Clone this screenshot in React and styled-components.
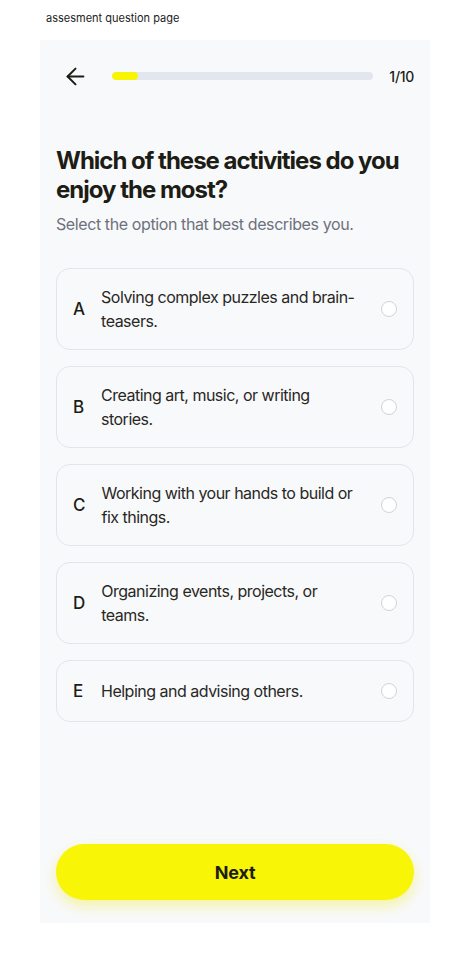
import styled, { createGlobalStyle } from "styled-components";
import { ArrowLeft } from "lucide-react";

const GlobalStyle = createGlobalStyle`
  body {
    margin: 0;
    background: #ffffff;
    font-family: Inter, "Noto Sans", sans-serif;
    color: #1d1d16;
  }
`;

const Page = styled.div`
  padding: 11px 40px 0 40px;
`;

const Caption = styled.div`
  font-size: 11px;
  line-height: 14px;
  color: #222;
  margin: 0 0 15px 6px;
`;

// Phone frame
const Frame = styled.div`
  width: 390px;
  height: 883px;
  box-sizing: border-box;
  background: #f8f9fb;
  padding: 24px 16px 23px;
  display: flex;
  flex-direction: column;
`;

const Header = styled.div`
  display: flex;
  align-items: center;
  height: 24px;
  padding-left: 6px;
`;

const BackButton = styled.button`
  border: none;
  background: none;
  padding: 0;
  display: flex;
  color: #1d1d16;
  cursor: pointer;
`;

const Track = styled.div`
  flex: 1;
  height: 8px;
  border-radius: 4px;
  background: #e2e7ef;
  margin: 0 16px 0 23px;
  overflow: hidden;
`;

const Fill = styled.div`
  height: 100%;
  border-radius: 4px;
  background: #f8f500;
`;

const Count = styled.span`
  font-size: 14px;
  font-weight: 500;
  letter-spacing: -0.3px;
`;

const Title = styled.h1`
  margin: 58px 0 0;
  font-size: 24px;
  line-height: 29px;
  font-weight: 700;
  letter-spacing: -1px;
  color: #1d1d16;
`;

const Subtitle = styled.p`
  margin: 8px 0 0;
  font-size: 16px;
  line-height: 24px;
  color: #6e717c;
  letter-spacing: -0.4px;
`;

const Options = styled.div`
  margin-top: 32px;
  display: flex;
  flex-direction: column;
  gap: 16px;
`;

const Card = styled.label`
  display: flex;
  align-items: center;
  box-sizing: border-box;
  padding: 0 16px;
  border: 1px solid #e1e5ee;
  border-radius: 14px;
  background: #f8f9fb;
  min-height: ${(p) => (p.$short ? "62px" : "82px")};
  cursor: pointer;
`;

const Letter = styled.span`
  font-size: 17px;
  font-weight: 500;
  margin-right: 16px;
  min-width: 12px;
`;

const OptionText = styled.span`
  flex: 1;
  font-size: 16px;
  line-height: 24px;
  letter-spacing: -0.5px;
  color: #28281f;
  padding-right: 22px;
`;

const Radio = styled.span`
  width: 16px;
  height: 16px;
  box-sizing: border-box;
  border-radius: 50%;
  border: 1px solid #cfd3db;
  background: #ffffff;
  flex-shrink: 0;
`;

const NextButton = styled.button`
  margin-top: auto;
  height: 56px;
  border: none;
  border-radius: 28px;
  background: #f8f506;
  box-shadow: 0 6px 14px rgba(238, 232, 0, 0.35);
  font-family: inherit;
  font-size: 18px;
  font-weight: 700;
  color: #1d1d16;
  letter-spacing: -0.2px;
  cursor: pointer;
`;

const options = [
  { key: "A", text: "Solving complex puzzles and brain-teasers." },
  { key: "B", text: "Creating art, music, or writing stories." },
  { key: "C", text: "Working with your hands to build or fix things." },
  { key: "D", text: "Organizing events, projects, or teams." },
  { key: "E", text: "Helping and advising others.", short: true },
];

const App = () => {
  const step = 1;
  const total = 10;

  return (
    <Page>
      <GlobalStyle />
      <Caption>assesment question page</Caption>
      <Frame>
        <Header>
          <BackButton aria-label="Back">
            <ArrowLeft size={27} strokeWidth={1.8} />
          </BackButton>
          <Track>
            <Fill style={{ width: `${(step / total) * 100}%` }} />
          </Track>
          <Count>
            {step}/{total}
          </Count>
        </Header>
        <Title>Which of these activities do you enjoy the most?</Title>
        <Subtitle>Select the option that best describes you.</Subtitle>
        <Options>
          {options.map((o) => (
            <Card key={o.key} $short={o.short}>
              <Letter>{o.key}</Letter>
              <OptionText>{o.text}</OptionText>
              <Radio />
            </Card>
          ))}
        </Options>
        <NextButton>Next</NextButton>
      </Frame>
    </Page>
  );
};

export default App;
